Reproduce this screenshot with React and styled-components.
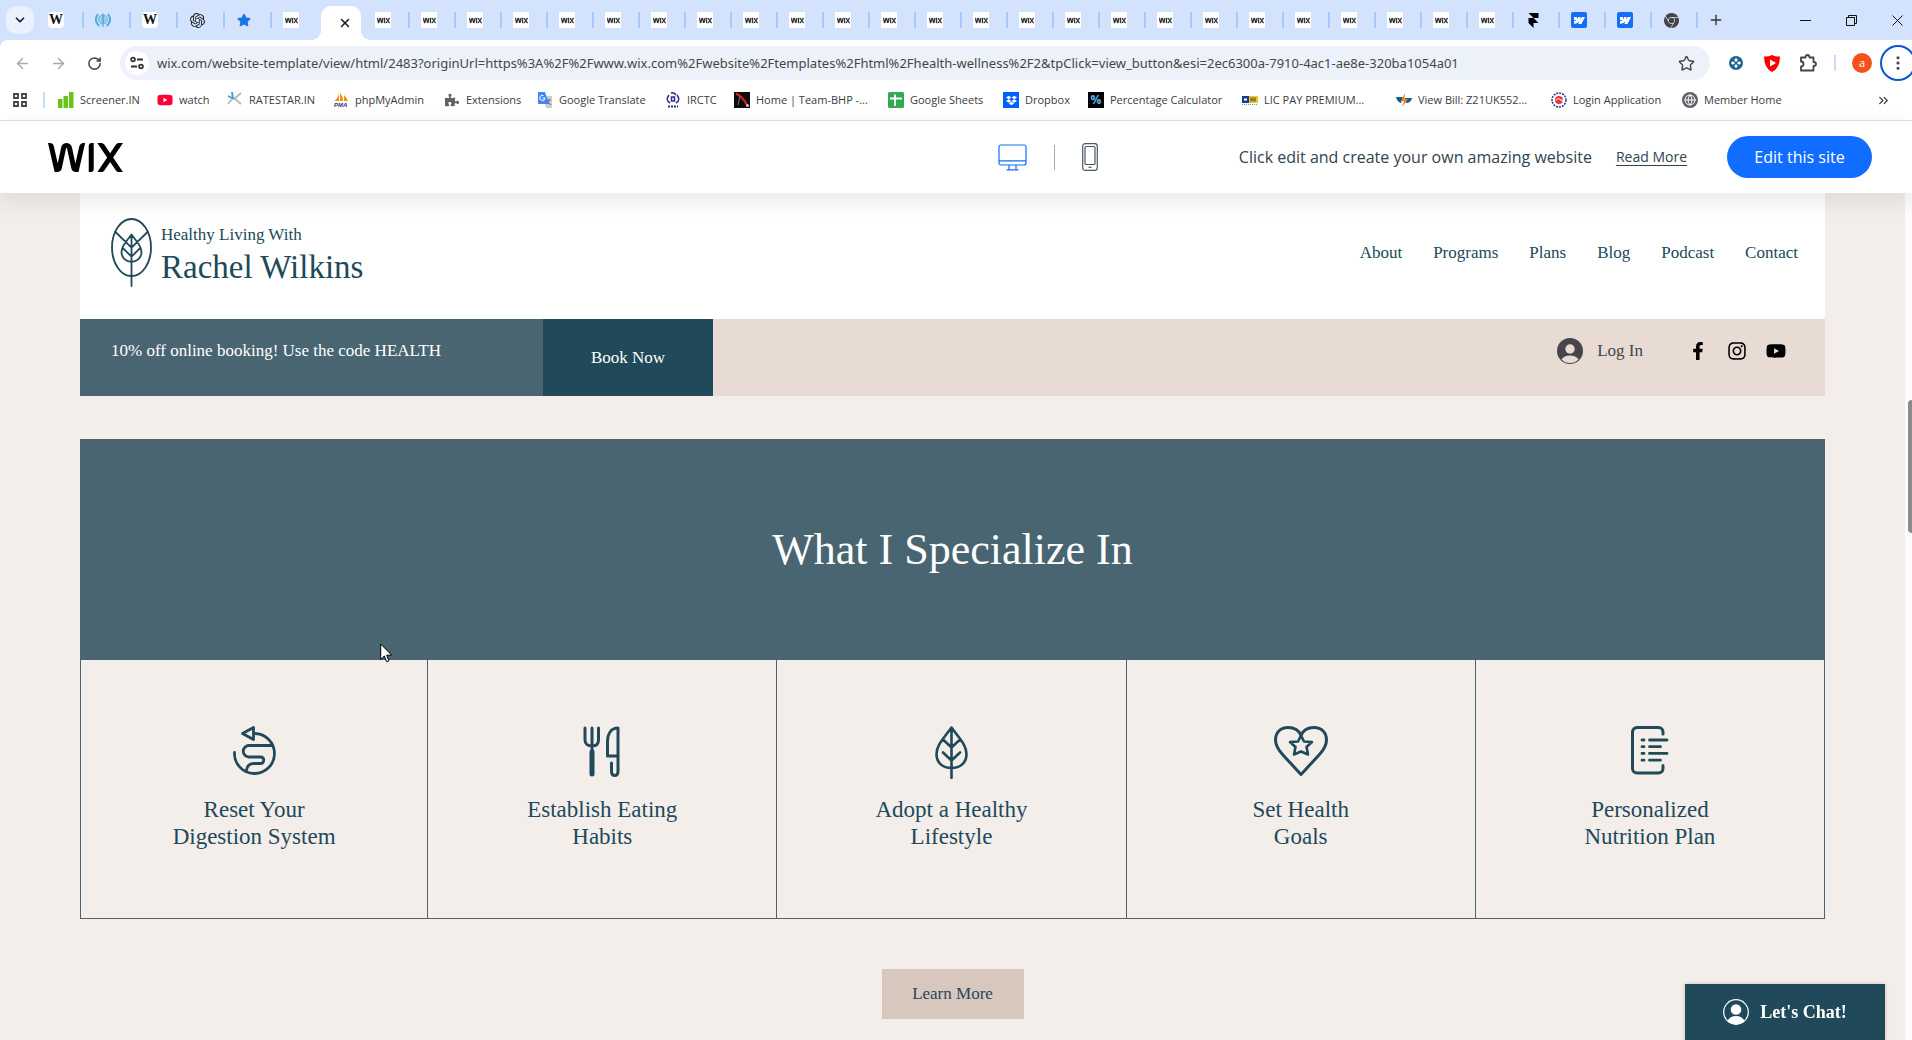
import React from "react";
import styled, { createGlobalStyle } from "styled-components";
import {
  ArrowLeft, ArrowRight, RotateCw, ChevronDown, ChevronsRight, X, Plus, Star, EllipsisVertical, Globe,
} from "lucide-react";
import {
  SiWix, SiOpenai, SiFramer, SiWebflow, SiDropbox, SiGooglechrome,
} from "react-icons/si";
import { FaFacebookF, FaInstagram, FaYoutube, FaStar, FaPuzzlePiece } from "react-icons/fa";

const ui = `"Open Sans", "Noto Sans", sans-serif`;
const serif = `"Liberation Serif", "Times New Roman", serif`;
const navy = "#20495a";
const slate = "#496572";

const GlobalStyle = createGlobalStyle`
  *, *::before, *::after { box-sizing: border-box; }
  body { margin: 0; font-family: ${ui}; background: #f4eeea; }
  button { font: inherit; border: 0; padding: 0; background: none; color: inherit; cursor: pointer; }
  h1, h2, h3, p { margin: 0; font-weight: 400; }
  a { color: inherit; text-decoration: none; }
  svg { display: block; flex: none; }
`;

const Page = styled.div`
  display: flex;
  flex-direction: column;
  min-height: 100vh;
  overflow: hidden;
`;

/* ---------- tab strip ---------- */
const TabStrip = styled.div`
  display: flex;
  align-items: center;
  height: 40px;
  background: #d3e2fd;
`;
const TabSearch = styled.button`
  display: grid;
  place-items: center;
  width: 28px;
  height: 28px;
  margin: 0 3px 0 6px;
  border-radius: 10px;
  background: #e9f0fe;
  color: #1f1f1f;
`;
const Tab = styled.button`
  display: flex;
  align-items: center;
  flex: 0 1 ${(p) => p.$width}px;
  height: 16px;
  padding-left: 11px;
  border-right: 2px solid ${(p) => (p.$plain ? "transparent" : "#a8c7fa")};
`;
const ActiveTab = styled.div`
  position: relative;
  display: flex;
  align-items: center;
  justify-content: flex-end;
  flex: 0 0 40px;
  align-self: flex-end;
  height: 34px;
  margin: 0 3px 0 2px;
  padding-right: 9px;
  border-radius: 10px 10px 0 0;
  background: #fff;
  color: #1f1f1f;
  &::before, &::after {
    content: "";
    position: absolute;
    bottom: 0;
    width: 10px;
    height: 10px;
  }
  &::before { right: 100%; background: radial-gradient(circle at 0 0, transparent 10px, #fff 10px); }
  &::after { left: 100%; background: radial-gradient(circle at 100% 0, transparent 10px, #fff 10px); }
`;
const Favicon = styled.span`
  display: grid;
  place-items: center;
  width: 16px;
  height: 16px;
  border-radius: ${(p) => p.$radius || 0}px;
  background: ${(p) => p.$bg || "transparent"};
  color: ${(p) => p.$color || "#1f1f1f"};
  font: ${(p) => p.$font || `700 12px/16px ${ui}`};
  flex: none;
`;
const NewTab = styled.button`
  display: grid;
  place-items: center;
  width: 36px;
  height: 28px;
  color: #333;
`;
const WindowButtons = styled.div`
  display: flex;
  margin-left: auto;
  margin-right: -8px;
`;
const WindowButton = styled.button`
  display: grid;
  place-items: center;
  width: 46px;
  height: 40px;
  color: #111;
`;

/* ---------- address row ---------- */
const AddressRow = styled.div`
  background: #d3e2fd;
`;
const AddressInner = styled.div`
  display: flex;
  align-items: center;
  height: 46px;
  padding-left: 4px;
  border-radius: 8px 0 0 0;
  background: #fff;
`;
const ToolButton = styled.button`
  display: grid;
  place-items: center;
  width: 36px;
  height: 36px;
  flex: none;
  color: ${(p) => (p.$muted ? "#a9a9a9" : "#454545")};
`;
const Omnibox = styled.div`
  display: flex;
  align-items: center;
  flex: 1;
  height: 34px;
  margin: 0 8px;
  padding: 0 6px 0 5px;
  border-radius: 17px;
  background: #edf1fa;
`;
const SiteInfo = styled.button`
  display: grid;
  place-items: center;
  width: 24px;
  height: 24px;
  border-radius: 50%;
  background: #fff;
`;
const Url = styled.input`
  flex: 1;
  min-width: 0;
  border: 0;
  outline: 0;
  padding: 0 0 0 8px;
  background: transparent;
  color: #454746;
  font: 400 13px/20px "Noto Sans", sans-serif;
`;
const Divider = styled.span`
  width: ${(p) => p.$w || 2}px;
  height: ${(p) => p.$h || 16}px;
  margin: 0 ${(p) => p.$gap || 0}px;
  background: ${(p) => p.$color || "#c9dcfb"};
  flex: none;
`;
const Avatar = styled.span`
  display: grid;
  place-items: center;
  width: 20px;
  height: 20px;
  border-radius: 50%;
  background: #f4511e;
  color: #fff;
  font: 400 11px/18px ${ui};
`;
const MenuButton = styled(ToolButton)`
  border: 2px solid #0b57d0;
  border-radius: 50%;
  margin-right: -4px;
`;

/* ---------- bookmarks ---------- */
const Bookmarks = styled.nav`
  display: flex;
  align-items: center;
  height: 35px;
  padding: 0 21px 6px 12px;
  border-bottom: 1px solid #dfe0e1;
  background: #fff;
  color: #3a3c3e;
  font: 400 11px/16px ${ui};
`;
const BookmarkList = styled.div`
  display: flex;
  flex: 1;
  margin-left: 13px;
  min-width: 0;
  overflow: hidden;
`;
const Bookmark = styled.a`
  display: flex;
  align-items: center;
  gap: 6px;
  flex: 0 0 ${(p) => p.$width}px;
  white-space: nowrap;
`;
const AppsGrid = styled.button`
  margin-right: 15px;
`;

/* ---------- wix bar ---------- */
const WixBar = styled.header`
  position: relative;
  z-index: 2;
  display: flex;
  align-items: center;
  height: 72px;
  padding: 0 40px 0 48px;
  background: #fff;
  box-shadow: 0 8px 20px 0 rgba(22, 45, 61, 0.1);
  color: #32434f;
  font: 400 16px/24px ${ui};
`;
const WixMark = styled(SiWix)`
  width: ${(p) => p.$width}px;
  height: ${(p) => p.$width}px;
`;
const Devices = styled.div`
  display: flex;
  align-items: center;
  gap: 27px;
  margin: 0 141px 0 auto;
`;
const ReadMore = styled.a`
  margin: 0 40px 0 24px;
  font-size: 14px;
  text-decoration: underline;
  text-underline-offset: 3px;
`;
const EditButton = styled.button`
  width: 145px;
  height: 42px;
  border-radius: 21px;
  background: #116dff;
  color: #fff;
`;

/* ---------- site ---------- */
const Viewport = styled.div`
  display: flex;
  flex: 1;
`;
const Site = styled.main`
  flex: 1;
  padding: 0 80px 21px;
  background: #f4eeea;
  color: ${navy};
  font: 400 17px/24px ${serif};
`;
const ScrollTrack = styled.div`
  width: 7px;
  padding: 207px 0 0 3px;
  background: #fcfbfa;
`;
const ScrollThumb = styled.div`
  height: 133px;
  border-radius: 4px 0 0 4px;
  background: #8b8b8b;
`;
const SiteHeader = styled.header`
  display: flex;
  justify-content: space-between;
  height: 126px;
  padding: 25px 27px 0 31px;
  background: #fff;
`;
const Brand = styled.a`
  display: flex;
  gap: 9px;
`;
const BrandText = styled.div`
  padding-top: 5px;
`;
const BrandName = styled.h1`
  padding-top: 2px;
  font-size: 33px;
  line-height: 36px;
`;
const SiteNav = styled.nav`
  display: flex;
  gap: 31px;
  padding-top: 23px;
`;
const PromoBar = styled.div`
  display: flex;
  height: 77px;
  background: #e8dbd3;
`;
const Promo = styled.p`
  width: 463px;
  padding: 20px 31px;
  background: ${slate};
  color: #fff;
`;
const BookNow = styled.a`
  display: grid;
  place-items: center;
  width: 170px;
  background: ${navy};
  color: #fff;
`;
const Account = styled.div`
  display: flex;
  align-items: center;
  height: 63px;
  margin-left: auto;
  padding-right: 39px;
  color: #45454b;
`;
const Login = styled.button`
  display: flex;
  align-items: center;
  gap: 14px;
  margin-right: 45px;
`;
const Social = styled.div`
  display: flex;
  gap: 19px;
  color: #000;
  a { display: grid; place-items: center; width: 20px; height: 20px; }
`;
const Specialties = styled.section`
  margin-top: 43px;
  border: 1px solid ${slate};
`;
const SectionTitle = styled.h2`
  display: grid;
  place-items: center;
  height: 220px;
  background: ${slate};
  color: #fff;
  font-size: 44px;
  line-height: 56px;
`;
const Cards = styled.div`
  display: grid;
  grid-template-columns: 347fr repeat(4, 350fr);
`;
const Card = styled.article`
  display: flex;
  flex-direction: column;
  align-items: center;
  height: 258px;
  padding-top: 66px;
  text-align: center;
  & + & { border-left: 1px solid ${slate}; }
`;
const CardIcon = styled.div`
  display: grid;
  justify-items: center;
  align-items: start;
  height: 70px;
`;
const CardTitle = styled.h3`
  font-size: 23px;
  line-height: 27px;
  white-space: pre-line;
`;
const LearnMore = styled.a`
  display: grid;
  place-items: center;
  width: 142px;
  height: 50px;
  margin: 50px auto 0;
  background: #d8c7bd;
`;
const Chat = styled.button`
  position: fixed;
  right: 27px;
  bottom: 0;
  display: flex;
  align-items: center;
  justify-content: center;
  gap: 11px;
  width: 200px;
  height: 56px;
  background: ${navy};
  color: #fff;
  font: 700 18px/24px ${serif};
  box-shadow: 0 0 4px rgba(0, 0, 0, 0.2);
`;
const Cursor = styled.svg`
  position: fixed;
  left: 380px;
  top: 643px;
  z-index: 3;
`;

/* ---------- drawings ---------- */
const Line = ({ w, h, sw = 3, children, color = navy }) => (
  <svg width={w} height={h} viewBox={`0 0 ${w} ${h}`} fill="none" stroke={color}
    strokeWidth={sw} strokeLinecap="round" strokeLinejoin="round" aria-hidden="true">{children}</svg>
);
const DigestionIcon = () => (
  <Line w={43} h={49} sw={2.8}>
    <path d="M9.500 7.500 20.500 1.500V13.500Z" />
    <path d="M21 7.500A20 20 0 1 1 1.500 26.500M39 19.500H16A5.200 5.200 0 0 0 16 31H28A3.300 3.300 0 0 1 28 37.500H21Q14.500 37.500 13.500 44" />
  </Line>
);
const CutleryIcon = () => (
  <Line w={38} h={51}>
    <path d="M2 2V14C2 18 5 20 9 20S15.500 18 15.500 14V2M9 2V24" />
    <path d="M9 26V48" strokeWidth="5" />
    <path d="M35 30H24.500V16C24.500 8 28 2 35 2V45C35 51 28.500 51 28.500 45V37" />
  </Line>
);
const LeafIcon = () => (
  <Line w={33} h={53} sw={2.6}>
    <path d="M16.500 1.500C9 12 1.500 19 1.500 28C1.500 37 8 42 16.500 42S31.500 37 31.500 28C31.500 19 24 12 16.500 1.500ZM16.500 2V52M8 13.500 16.500 21.500 25 13.500M8 26.500 16.500 34.500 25 26.500" />
  </Line>
);
const HeartIcon = () => (
  <Line w={54} h={50}>
    <path d="M27 48.500 9 29C4 23.500 1.500 19 1.500 14C1.500 6 7 1.500 14 1.500C20 1.500 25 4.500 27 9.500C29 4.500 34 1.500 40 1.500C47 1.500 52.500 6 52.500 14C52.500 19 50 23.500 45 29Z" />
    <path d="M27 9.500 30 15.500 38 16 32.500 21 34 28.500 27 25.500 20 28.500 21.500 21 16 16 24 15.500Z" strokeWidth="2.6" />
  </Line>
);
const PlanIcon = () => (
  <Line w={38} h={49}>
    <path d="M32 8V6A4.500 4.500 0 0 0 27.500 1.500H6A4.500 4.500 0 0 0 1.500 6V42.500A4.500 4.500 0 0 0 6 47H27.500A4.500 4.500 0 0 0 32 42.500V39.500" />
    <path d="M11 14H13M18.500 14H36M11 20.700H13M18.500 20.700H29.500M11 27.400H13M18.500 27.400H36M11 34.200H13M18.500 34.200H29.500" strokeWidth="2.8" />
  </Line>
);
const BrandIcon = () => (
  <Line w={41} h={69} sw={1.8}>
    <ellipse cx="20.500" cy="29.500" rx="19.500" ry="28.500" />
    <path d="M20.500 16.500C16 23 10.500 27 10.500 34C10.500 40 15 43.800 20.500 43.800S30.500 40 30.500 34C30.500 27 25 23 20.500 16.500ZM20.500 17V68M4.500 14 20.500 29.700 36.500 14M11.500 29.700 20.500 38.700 29.500 29.700" />
  </Line>
);
const PuzzleOutline = () => (
  <svg width="20" height="20" viewBox="0 0 20 20" fill="none" stroke="#454545" strokeWidth="1.8" aria-hidden="true">
    <path d="M3 4.500H7.500Q7.500 2 9.500 2T11.500 4.500H15.500V9Q18 9 18 11T15.500 13V17.500H3V13.500Q5.500 13.500 5.500 11T3 8.500Z" strokeLinejoin="round" />
  </svg>
);
const WhoIcon = () => (
  <svg width="16" height="16" viewBox="0 0 16 16" fill="none" stroke="#4fabdf" aria-hidden="true">
    <circle cx="8" cy="7.500" r="4.500" fill="#9fd0ee" strokeWidth=".8" />
    <path d="M3 2C0 6 0 11 4.500 14M13 2C16 6 16 11 11.500 14" strokeWidth="2" />
    <path d="M8 1.500V15M9.500 4Q6 5 8 7T7 11" strokeWidth="1.200" />
  </svg>
);
const PersonIcon = ({ ring, color }) => (
  <svg width="26" height="26" viewBox="0 0 26 26" aria-hidden="true">
    {ring ? (
      <>
        <circle cx="13" cy="13" r="12.300" fill="none" stroke={color} strokeWidth="1.200" />
        <circle cx="13" cy="10.500" r="5.300" fill={color} />
        <path d="M4.500 22Q7 17 13 17T21.500 22Q18 25.300 13 25.300T4.500 22Z" fill={color} />
      </>
    ) : (
      <>
        <circle cx="13" cy="13" r="13" fill={color} />
        <circle cx="13" cy="11" r="4.700" fill="#e8dbd3" />
        <path d="M4.500 21.500Q7 17.500 13 17.500T21.500 21.500Q18 25 13 25T4.500 21.500Z" fill="#e8dbd3" />
      </>
    )}
  </svg>
);

/* ---------- data ---------- */
const wikiFav = { $bg: "#fff", $radius: 4, $color: "#111", $font: `700 14px/16px ${serif}`, children: "W" };
const wixFav = { $bg: "#fff", children: <SiWix size={13} stroke="#1f1f1f" strokeWidth=".6" /> };
const webflowFav = { $bg: "#146ef5", $radius: 2, $color: "#fff", children: <SiWebflow size={11} /> };
const leftTabs = [
  { name: "Wikipedia", ...wikiFav },
  { name: "WHO", children: <WhoIcon /> },
  { name: "Wikipedia", ...wikiFav },
  { name: "ChatGPT", children: <SiOpenai size={15} /> },
  { name: "Starred", $color: "#1a73e8", children: <FaStar size={14} /> },
  { name: "Wix", ...wixFav },
];
const rightTabs = [
  ...Array.from({ length: 25 }, () => ({ name: "Wix", ...wixFav })),
  { name: "Framer", $color: "#000", children: <SiFramer size={15} /> },
  { name: "Webflow", ...webflowFav },
  { name: "Webflow", ...webflowFav },
  { name: "Chrome", $color: "#444", children: <SiGooglechrome size={15} /> },
];

const Bars = () => (
  <svg width="16" height="16" viewBox="0 0 16 16" fill="#6cc21a"><path d="M0 7h4.500v9H0zM5.500 4h4.500v12H5.500zM11 0h4.500v16H11z" /></svg>
);
const Ratestar = () => (
  <svg width="16" height="16" viewBox="0 0 16 16" fill="none" strokeWidth="1.800"><path d="M7 7L14 1M7 6L14 12M5 7L1 12" stroke="#b4b8bb" /><path d="M5 0L6 7M1 4L7 7" stroke="#3c9bd0" /></svg>
);
const Pma = () => (
  <svg width="16" height="16" viewBox="0 0 16 16"><path d="M1 9Q5 7 6 1V9ZM7 9V1Q10 4 10 9ZM11 9V3Q14 6 15 9Z" fill="#f29111" /><text x="1" y="15" fontSize="6" fontWeight="700" fontStyle="italic" fontFamily="Liberation Sans, sans-serif" fill="#33336b">PMA</text></svg>
);
const Translate = () => (
  <svg width="16" height="16" viewBox="0 0 16 16"><path d="M6 4H15V16H9Z" fill="#c9ccd1" /><path d="M1 0H8L12 12H1Z" fill="#4285f4" /><path d="M8 6H5.500M8 6A2.600 2.600 0 1 1 6.500 3.500" stroke="#fff" fill="none" /><path d="M10 8H14M12 7V8Q12 11 10 12M11 10L14 13" stroke="#5f6b77" fill="none" strokeWidth=".9" /></svg>
);
const Irctc = () => (
  <svg width="16" height="16" viewBox="0 0 16 16" fill="none" stroke="#2b2b8c" strokeWidth="1.500"><path d="M4 3Q0 8 5 11M12 3Q16 8 11 11M6 1Q9 0 11 3" /><rect x="6.500" y="5" width="3" height="4" /><path d="M3 14.500H13" strokeWidth="2" strokeDasharray="2 1" /></svg>
);
const TeamBhp = () => (
  <svg width="16" height="16" viewBox="0 0 16 16"><path fill="#0c0c0c" d="M0 0h16v16H0z" /><path d="M2 1.500Q9 5 13 13" stroke="#e01b1b" strokeWidth="2.200" fill="none" /><path d="M4 13L6 4" stroke="#777" /><circle cx="13.500" cy="13.500" r="1.500" fill="#ccc" /></svg>
);
const Sheets = () => (
  <svg width="16" height="16" viewBox="0 0 16 16"><rect width="16" height="16" rx="1.500" fill="#34a853" /><path d="M2 6.500H14M7 2.500V14" stroke="#fff" strokeWidth="1.800" /></svg>
);
const Lic = () => (
  <svg width="16" height="16" viewBox="0 0 16 16"><path fill="#1a3f8a" d="M0 4h7v7H0z" /><path fill="#f5c518" d="M7 4h9v7H7z" /><path d="M2 6.500H5V8.500H2Z" fill="#fff" /><path d="M9 5.500V9.500M11 5.500V9.500M13 5.500V9.500" stroke="#1a3f8a" /><path d="M0 12.500H16" stroke="#6d90c7" strokeDasharray="1 1" /></svg>
);
const Bill = () => (
  <svg width="16" height="16" viewBox="0 0 16 16"><path d="M0 5H7L5 11Q1 10 0 5Z" fill="#155f80" /><path d="M9 6H16Q15 11 10 11Z" fill="#155f80" /><path d="M9 1L5 9H8L6 15L12 7H8.500Z" fill="#ef7d22" /></svg>
);
const LoginSeal = () => (
  <svg width="16" height="16" viewBox="0 0 16 16" fill="none"><circle cx="8" cy="8" r="7" stroke="#25358c" strokeWidth="1.500" strokeDasharray="2 1" /><circle cx="8" cy="8" r="4" fill="#e23b3b" /><path d="M5 8Q8 5 10 8T12 7" stroke="#fff" /></svg>
);

const bookmarks = [
  { label: "Screener.IN", width: 99, icon: <Bars /> },
  { label: "watch", width: 70, fav: { $color: "#ff0033" }, icon: <FaYoutube size={16} /> },
  { label: "RATESTAR.IN", width: 106, icon: <Ratestar /> },
  { label: "phpMyAdmin", width: 111, icon: <Pma /> },
  { label: "Extensions", width: 93, fav: { $color: "#5f6368" }, icon: <FaPuzzlePiece size={14} /> },
  { label: "Google Translate", width: 128, icon: <Translate /> },
  { label: "IRCTC", width: 69, icon: <Irctc /> },
  { label: "Home | Team-BHP -...", width: 154, icon: <TeamBhp /> },
  { label: "Google Sheets", width: 115, icon: <Sheets /> },
  { label: "Dropbox", width: 85, fav: { $bg: "#0061ff", $color: "#fff" }, icon: <SiDropbox size={11} /> },
  { label: "Percentage Calculator", width: 154, fav: { $bg: "#000", $color: "#5cb8f5" }, icon: "%" },
  { label: "LIC PAY PREMIUM...", width: 154, icon: <Lic /> },
  { label: "View Bill: Z21UK552...", width: 155, icon: <Bill /> },
  { label: "Login Application", width: 131, icon: <LoginSeal /> },
  { label: "Member Home", width: 110, fav: { $bg: "#5f6368", $color: "#fff", $radius: 8 }, icon: <Globe size={12} /> },
];
const navLinks = ["About", "Programs", "Plans", "Blog", "Podcast", "Contact"];
const cards = [
  { title: "Reset Your\nDigestion System", Icon: DigestionIcon },
  { title: "Establish Eating\nHabits", Icon: CutleryIcon },
  { title: "Adopt a Healthy\nLifestyle", Icon: LeafIcon },
  { title: "Set Health\nGoals", Icon: HeartIcon },
  { title: "Personalized\nNutrition Plan", Icon: PlanIcon },
];
const url =
  "wix.com/website-template/view/html/2483?originUrl=https%3A%2F%2Fwww.wix.com%2Fwebsite%2Ftemplates%2Fhtml%2Fhealth-wellness%2F2&tpClick=view_button&esi=2ec6300a-7910-4ac1-ae8e-320ba1054a01";

const TabItem = ({ name, width, plain, ...fav }) => (
  <Tab $width={width} $plain={plain} aria-label={name}><Favicon {...fav} /></Tab>
);

export default function App() {
  return (
    <Page>
      <GlobalStyle />
      <TabStrip>
        <TabSearch aria-label="Search tabs"><ChevronDown size={14} strokeWidth={3} /></TabSearch>
        {leftTabs.map((t, i) => <TabItem key={i} width={47} plain={i === leftTabs.length - 1} {...t} />)}
        <ActiveTab><button aria-label="Close tab"><X size={14} strokeWidth={2.6} /></button></ActiveTab>
        {rightTabs.map((t, i) => <TabItem key={i} width={46} {...t} />)}
        <NewTab aria-label="New tab"><Plus size={16} /></NewTab>
        <WindowButtons>
          <WindowButton aria-label="Minimize">
            <svg width="11" height="11" stroke="currentColor"><path d="M0 5.500H11" /></svg>
          </WindowButton>
          <WindowButton aria-label="Restore">
            <svg width="11" height="11" stroke="currentColor" fill="none"><path d="M.5 2.500H8.500V10.500H.5ZM2.500 2.500V.5H10.500V8.500H8.500" /></svg>
          </WindowButton>
          <WindowButton aria-label="Close">
            <svg width="11" height="11" stroke="currentColor"><path d="M.5 .5 10.500 10.500M10.500 .5 .5 10.500" /></svg>
          </WindowButton>
        </WindowButtons>
      </TabStrip>

      <AddressRow>
        <AddressInner>
          <ToolButton $muted aria-label="Back"><ArrowLeft size={17} /></ToolButton>
          <ToolButton $muted aria-label="Forward"><ArrowRight size={17} /></ToolButton>
          <ToolButton aria-label="Reload"><RotateCw size={15} strokeWidth={2.4} /></ToolButton>
          <Omnibox>
            <SiteInfo aria-label="Site information">
              <svg width="14" height="14" viewBox="0 0 14 14" fill="none" stroke="#333" strokeWidth="1.800"><circle cx="3" cy="3.500" r="1.900" /><path d="M7 3.500H13M1 10.500H7" /><circle cx="11" cy="10.500" r="1.900" /></svg>
            </SiteInfo>
            <Url aria-label="Address" defaultValue={url} />
            <ToolButton aria-label="Bookmark"><Star size={17} /></ToolButton>
          </Omnibox>
          <ToolButton aria-label="Extension">
            <svg width="14" height="14" viewBox="0 0 16 16"><circle cx="8" cy="8" r="8" fill="#1f6391" /><path d="M8 2 10 4.500 8 7 6 4.500ZM8 9 10 11.500 8 14 6 11.500ZM2 8 4.500 6 7 8 4.500 10ZM9 8 11.500 6 14 8 11.500 10Z" fill="#fff" /></svg>
          </ToolButton>
          <ToolButton aria-label="Video extension">
            <svg width="16" height="17" viewBox="0 0 16 17"><path d="M8 0Q12 2 16 1.500Q16 13 8 17Q0 13 0 1.500Q4 2 8 0Z" fill="#f00" /><path d="M6 4.500 12 8 6 11.500Z" fill="#fff" /></svg>
          </ToolButton>
          <ToolButton aria-label="Extensions"><PuzzleOutline /></ToolButton>
          <Divider $gap={8} />
          <ToolButton aria-label="Profile"><Avatar>a</Avatar></ToolButton>
          <MenuButton aria-label="Menu"><EllipsisVertical size={18} strokeWidth={2.2} /></MenuButton>
        </AddressInner>
      </AddressRow>

      <Bookmarks>
        <AppsGrid aria-label="Apps">
          <svg width="16" height="16" viewBox="0 0 16 16" fill="none" stroke="#454545" strokeWidth="1.800"><path d="M2 2H6V6H2ZM10 2H14V6H10ZM2 10H6V14H2ZM10 10H14V14H10Z" /></svg>
        </AppsGrid>
        <Divider />
        <BookmarkList>
          {bookmarks.map((b) => (
            <Bookmark key={b.label} href="#" $width={b.width}><Favicon {...b.fav}>{b.icon}</Favicon>{b.label}</Bookmark>
          ))}
        </BookmarkList>
        <button aria-label="More bookmarks"><ChevronsRight size={15} /></button>
      </Bookmarks>

      <WixBar>
        <a href="#" aria-label="Wix"><WixMark $width={75} color="#000" /></a>
        <Devices>
          <button aria-label="Desktop view">
            <svg width="29" height="27" viewBox="0 0 29 27" fill="none" stroke="#116dff" strokeWidth="1.200"><rect x="1" y="1" width="27" height="20" rx="2" /><path d="M1 16.800H28M11 21V25.500M18 21V25.500M8.500 25.800H20.500" /></svg>
          </button>
          <Divider $w={1} $h={25} $color="#a3adb5" />
          <button aria-label="Mobile view">
            <svg width="16" height="28" viewBox="0 0 16 28" fill="none" stroke="#4b5863" strokeWidth="1.200"><rect x=".7" y=".7" width="14.600" height="26.600" rx="2.500" /><rect x="3" y="3.500" width="10" height="18" rx="1" /><path d="M6.500 24.300H9.500" /></svg>
          </button>
        </Devices>
        <span>Click edit and create your own amazing website</span>
        <ReadMore href="#">Read More</ReadMore>
        <EditButton>Edit this site</EditButton>
      </WixBar>

      <Viewport>
        <Site>
          <SiteHeader>
            <Brand href="#">
              <BrandIcon />
              <BrandText>
                <p>Healthy Living With</p>
                <BrandName>Rachel Wilkins</BrandName>
              </BrandText>
            </Brand>
            <SiteNav>{navLinks.map((l) => <a key={l} href="#">{l}</a>)}</SiteNav>
          </SiteHeader>
          <PromoBar>
            <Promo>10% off online booking! Use the code HEALTH</Promo>
            <BookNow href="#">Book Now</BookNow>
            <Account>
              <Login><PersonIcon color="#45454b" />Log In</Login>
              <Social>
                <a href="#" aria-label="Facebook"><FaFacebookF size={18} /></a>
                <a href="#" aria-label="Instagram"><FaInstagram size={20} /></a>
                <a href="#" aria-label="YouTube"><FaYoutube size={20} /></a>
              </Social>
            </Account>
          </PromoBar>
          <Specialties>
            <SectionTitle>What I Specialize In</SectionTitle>
            <Cards>
              {cards.map(({ title, Icon }) => (
                <Card key={title}>
                  <CardIcon><Icon /></CardIcon>
                  <CardTitle>{title}</CardTitle>
                </Card>
              ))}
            </Cards>
          </Specialties>
          <LearnMore href="#">Learn More</LearnMore>
        </Site>
        <ScrollTrack><ScrollThumb /></ScrollTrack>
      </Viewport>
      <Chat><PersonIcon ring color="#fff" />Let's Chat!</Chat>
      <Cursor width="13" height="20" viewBox="0 0 13 20" aria-hidden="true">
        <path d="M.7 1V16.500L4.300 13 6.700 18.700 9 17.700 6.600 12.200H11.700Z" fill="#fff" stroke="#000" />
      </Cursor>
    </Page>
  );
}
